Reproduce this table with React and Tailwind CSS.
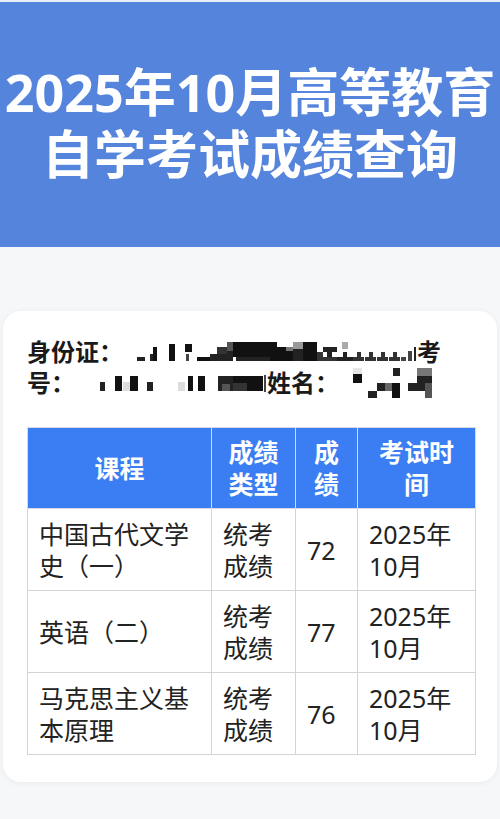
const font = { fontFamily: '"Noto Sans", "Noto Sans CJK SC", sans-serif' };

// redaction mosaic, rects in page coordinates: [x, y, w, h, fill]
const mosaicA = [
  [137, 358, 8, 4, "#222"],
  [150, 355, 4, 7, "#222"],
  [153, 348, 4, 14, "#111"],
  [169, 345, 6, 17, "#111"],
  [185, 345, 7, 8, "#111"],
  [186, 355, 3, 7, "#444"],
  [197, 358, 13, 4, "#111"],
  [210, 355, 17, 7, "#222"],
  [217, 348, 10, 7, "#333"],
  [227, 343, 6, 9, "#555"],
  [227, 352, 6, 10, "#222"],
  [233, 343, 44, 15, "#111"],
  [236, 358, 38, 4, "#222"],
  [270, 348, 23, 14, "#111"],
  [286, 348, 7, 4, "#777"],
  [293, 343, 10, 7, "#999"],
  [293, 350, 10, 12, "#222"],
  [303, 343, 14, 19, "#111"],
  [317, 353, 6, 9, "#333"],
  [323, 348, 14, 5, "#222"],
  [327, 353, 5, 9, "#222"],
  [323, 358, 14, 4, "#333"],
  [342, 343, 6, 7, "#aaa"],
  [337, 358, 16, 4, "#222"],
  [343, 353, 4, 5, "#222"],
  [353, 358, 11, 4, "#333"],
  [357, 353, 4, 5, "#333"],
  [365, 358, 11, 4, "#333"],
  [369, 353, 4, 5, "#333"],
  [377, 358, 11, 4, "#333"],
  [381, 353, 4, 5, "#333"],
  [389, 358, 11, 4, "#333"],
  [393, 353, 4, 5, "#333"],
  [401, 358, 5, 4, "#444"],
  [408, 352, 4, 10, "#444"],
  [414, 348, 2, 14, "#222"],
];

const mosaicB = [
  [100, 383, 5, 9, "#222"],
  [115, 377, 7, 15, "#111"],
  [123, 383, 7, 9, "#ddd"],
  [130, 377, 8, 15, "#111"],
  [147, 383, 6, 9, "#222"],
  [178, 383, 7, 9, "#ddd"],
  [188, 377, 5, 15, "#111"],
  [198, 377, 7, 15, "#111"],
  [218, 377, 15, 15, "#222"],
  [222, 385, 8, 7, "#555"],
  [233, 377, 14, 7, "#111"],
  [233, 384, 14, 8, "#333"],
  [247, 377, 16, 15, "#111"],
  [264, 376, 2, 17, "#444"],
];

const mosaicC = [
  [353, 369, 9, 6, "#e6e6e6"],
  [353, 375, 9, 9, "#111"],
  [393, 369, 7, 8, "#222"],
  [377, 384, 8, 8, "#222"],
  [385, 384, 7, 8, "#666"],
  [392, 384, 8, 16, "#111"],
  [368, 392, 9, 8, "#222"],
  [417, 369, 15, 8, "#777"],
  [417, 377, 15, 7, "#222"],
  [408, 384, 17, 8, "#222"],
  [425, 384, 7, 16, "#555"],
];

function Mosaic({ rects, x, y, w }) {
  return (
    <svg
      width={w}
      height="31"
      viewBox={`${x} ${y} ${w} 31`}
      className="inline-block align-top"
    >
      {rects.map(([rx, ry, rw, rh, f], i) => (
        <rect key={i} x={rx} y={ry} width={rw} height={rh} fill={f} />
      ))}
    </svg>
  );
}

const rows = [
  { course: "中国古代文学史（一）", type: "统考成绩", score: "72", time: "2025年10月" },
  { course: "英语（二）", type: "统考成绩", score: "77", time: "2025年10月" },
  { course: "马克思主义基本原理", type: "统考成绩", score: "76", time: "2025年10月" },
];

export default function App() {
  return (
    <div className="w-[500px] min-h-[819px] bg-[#f6f7f9]" style={font}>
      {/* header */}
      <header className="h-[247px] bg-[#5584dc] border-t-2 border-[#e8eefa] flex flex-col items-center justify-center text-white font-bold text-[52px] leading-[62px] whitespace-nowrap">
        <h1 className="mt-[-4px]">2025年10月高等教育</h1>
        <h1>自学考试成绩查询</h1>
      </header>

      <div className="pt-[64px] px-[3px] pb-[36px]">
        <div className="bg-white rounded-[18px] shadow-[0_1px_6px_rgba(0,0,0,0.06)] px-[24px] pt-[25px] pb-[27px]">
          {/* student info */}
          <p className="text-[24px] leading-[31px] font-bold text-[#1a1a1a] whitespace-nowrap">
            身份证：
            <Mosaic rects={mosaicA} x={123} y={337} w={294} />
            考
            <br />
            号：
            <Mosaic rects={mosaicB} x={75} y={368} w={192} />
            姓名：
            <Mosaic rects={mosaicC} x={339} y={368} w={96} />
          </p>

          {/* score table */}
          <table className="mt-[29px] table-fixed border-collapse w-[448px] text-[25px] leading-[32px]">
            <colgroup>
              <col className="w-[184px]" />
              <col className="w-[84px]" />
              <col className="w-[62px]" />
              <col className="w-[118px]" />
            </colgroup>
            <thead>
              <tr className="bg-[#3b7ef3] text-white font-bold">
                <th className="border border-[#d6dbe4] px-[12px] py-[8px] text-center">课程</th>
                <th className="border border-[#d6dbe4] px-[12px] py-[8px] text-center">成绩类型</th>
                <th className="border border-[#d6dbe4] px-[12px] py-[8px] text-center">成绩</th>
                <th className="border border-[#d6dbe4] px-[12px] py-[8px] text-center">考试时间</th>
              </tr>
            </thead>
            <tbody className="text-[#222]">
              {rows.map((r) => (
                <tr key={r.course} className="h-[82px]">
                  <td className="border border-[#d4d4d4] px-[11px] py-[8px] align-middle">{r.course}</td>
                  <td className="border border-[#d4d4d4] px-[11px] py-[8px] align-middle">{r.type}</td>
                  <td className="border border-[#d4d4d4] px-[11px] py-[8px] align-middle">{r.score}</td>
                  <td className="border border-[#d4d4d4] px-[11px] py-[8px] align-middle">{r.time}</td>
                </tr>
              ))}
            </tbody>
          </table>
        </div>
      </div>
    </div>
  );
}
